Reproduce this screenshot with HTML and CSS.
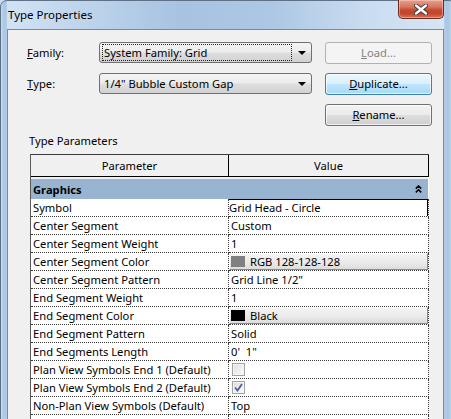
FILE: index.html
```html
<!DOCTYPE html>
<html>
<head>
<meta charset="utf-8">
<title>Type Properties</title>
<link rel="stylesheet" href="styles.css">
</head>
<body>
<div class="window">
  <div class="titlebar">
    <span class="title">Type Properties</span>
    <div class="close">
      <svg width="14" height="11" viewBox="0 0 14 11">
        <path d="M2 1.5 L12 9.5 M12 1.5 L2 9.5" stroke="#3a3a3a" stroke-width="4.2" stroke-linecap="round"/>
        <path d="M2 1.5 L12 9.5 M12 1.5 L2 9.5" stroke="#ffffff" stroke-width="2.4" stroke-linecap="round"/>
      </svg>
    </div>
  </div>
  <div class="client">
    <div class="topgrid">
      <span class="lbl"><u>F</u>amily:</span>
      <div class="combo"><span class="ctext focus">System Family: Grid</span><span class="arrow"></span></div>
      <div class="btn disabled"><u>L</u>oad...</div>

      <span class="lbl"><u>T</u>ype:</span>
      <div class="combo"><span class="ctext">1/4" Bubble Custom Gap</span><span class="arrow"></span></div>
      <div class="btn hot"><u>D</u>uplicate...</div>

      <span></span>
      <span></span>
      <div class="btn"><u>R</u>ename...</div>
    </div>

    <div class="section">Type Parameters</div>

    <div class="table">
      <div class="hcell">Parameter</div>
      <div class="hcell">Value</div>

      <div class="band">
        <span>Graphics</span>
        <svg width="7" height="8" viewBox="0 0 7 8"><path d="M0.8 3.6 L3.5 0.9 L6.2 3.6 M0.8 7.4 L3.5 4.7 L6.2 7.4" stroke="#000" stroke-width="1.5" fill="none"/></svg>
      </div>

      <div class="cell">Symbol</div>
      <div class="cell val"><div class="selbox">Grid Head - Circle</div></div>

      <div class="cell">Center Segment</div>
      <div class="cell val">Custom</div>

      <div class="cell">Center Segment Weight</div>
      <div class="cell val">1</div>

      <div class="cell">Center Segment Color</div>
      <div class="cell val"><div class="colorbtn"><span class="swatch gray"></span>RGB 128-128-128</div></div>

      <div class="cell">Center Segment Pattern</div>
      <div class="cell val">Grid Line 1/2"</div>

      <div class="cell">End Segment Weight</div>
      <div class="cell val">1</div>

      <div class="cell">End Segment Color</div>
      <div class="cell val"><div class="colorbtn"><span class="swatch black"></span>Black</div></div>

      <div class="cell">End Segment Pattern</div>
      <div class="cell val">Solid</div>

      <div class="cell">End Segments Length</div>
      <div class="cell val">0'&nbsp; 1"</div>

      <div class="cell">Plan View Symbols End 1 (Default)</div>
      <div class="cell val"><span class="check"></span></div>

      <div class="cell">Plan View Symbols End 2 (Default)</div>
      <div class="cell val"><span class="check">
        <svg width="11" height="11" viewBox="0 0 11 11"><path d="M2 5.5 L4.5 8.5 L9 2" stroke="#4b5f96" stroke-width="1.8" fill="none"/></svg>
      </span></div>

      <div class="cell">Non-Plan View Symbols (Default)</div>
      <div class="cell val">Top</div>

      <div class="cell"></div>
      <div class="cell val"></div>
    </div>
  </div>
</div>
</body>
</html>
```
FILE: styles.css
```css
* { box-sizing: border-box; margin: 0; padding: 0; }
html, body { width: 451px; height: 419px; overflow: hidden; background: #c9dcf0; }
body { font-family: "Noto Sans", "Liberation Sans", sans-serif; font-size: 11.2px; color: #000; }

.window {
  width: 456px;
  height: 440px;
  border: 1px solid #5f7186;
  border-radius: 7px 7px 0 0;
  background:
    linear-gradient(90deg, #c6daef 0px, #a9c6e4 3px, #b4cde8 6px, transparent 6px, transparent 443px, #b4cde8 443px, #a9c6e4 447px, #c6daef 452px),
    linear-gradient(90deg, #d3e3f4 0%, #bcd3eb 20%, #a7c3e1 40%, #adc8e4 60%, #c9dcf0 80%, #d8e6f4 100%);
  display: flex;
  flex-direction: column;
}

.titlebar {
  height: 28px;
  margin-left: 6px;
  width: 437px;
  display: flex;
  justify-content: space-between;
  align-items: flex-start;
}
.title {
  font-size: 11.5px;
  padding-left: 1px;
  margin-top: 6px;
  line-height: 16px;
  color: #000;
}
.close {
  width: 46px;
  height: 19px;
  margin-top: -1px;
  border: 1px solid #6b2a1e;
  border-top: none;
  border-radius: 0 0 5px 5px;
  background: linear-gradient(180deg, #e6a08f 0%, #d7735c 40%, #c44a2f 55%, #c3452a 75%, #d6735a 100%);
  box-shadow: inset 0 0 0 1px rgba(255, 220, 210, 0.45);
  display: flex;
  align-items: center;
  justify-content: center;
}

.client {
  margin-left: 6px;
  width: 437px;
  flex: 1;
  border: 1px solid #7a8a9c;
  background: #f0f0f0;
  padding: 12px 0 0 19px;
}

.topgrid {
  display: grid;
  grid-template-columns: 59px 213px 107px;
  grid-auto-rows: 22px;
  column-gap: 13px;
  row-gap: 9px;
}
.lbl { display: flex; align-items: center; line-height: 14px; padding-bottom: 1px; }
u { text-decoration: underline; text-underline-offset: 1px; }

.combo {
  height: 21px;
  border: 1px solid #707070;
  border-radius: 3px;
  background: linear-gradient(180deg, #f4f4f4 0%, #ececec 48%, #dedede 52%, #d2d2d2 100%);
  display: flex;
  align-items: center;
  padding: 0 4px 0 2px;
}
.ctext {
  flex: 1;
  line-height: 15px;
  padding-left: 1px;
  margin-right: 6px;
  border: 1px dotted transparent;
}
.ctext.focus { border-color: #222; }
.arrow {
  width: 0; height: 0;
  border-left: 4px solid transparent;
  border-right: 4px solid transparent;
  border-top: 4px solid #000;
  margin-right: 1px;
}

.btn {
  border: 1px solid #707070;
  border-radius: 3px;
  background: linear-gradient(180deg, #f3f3f3 0%, #ebebeb 48%, #dddddd 52%, #cfcfcf 100%);
  box-shadow: inset 0 0 0 1px rgba(255, 255, 255, 0.7);
  display: flex;
  align-items: center;
  justify-content: center;
  line-height: 14px;
}
.btn.disabled {
  border-color: #adb2b5;
  background: #f4f4f4;
  box-shadow: none;
  color: #838383;
}
.btn.hot {
  border-color: #3c7fb1;
  background: linear-gradient(180deg, #eaf6fd 0%, #d9f0fc 48%, #bee6fd 52%, #a7d9f5 100%);
}

.section {
  margin: 8px 0 6px 2px;
  line-height: 14px;
}

.table {
  margin-left: 3px;
  width: 399px;
  display: grid;
  grid-template-columns: 198px 200px;
  border-left: 1px solid #5a5a5a;
  border-top: 1px solid #3c3c3c;
  background: #ffffff;
}
.hcell {
  height: 22px;
  background: #f0f0f0;
  border-right: 1px solid #000;
  border-bottom: 1px solid #000;
  display: flex;
  align-items: center;
  justify-content: center;
  padding-bottom: 1px;
}
.band {
  grid-column: 1 / span 2;
  height: 22px;
  margin-right: 1px;
  border-top: 2px solid #f0f0f0;
  background: #99b4d1;
  display: flex;
  align-items: center;
  justify-content: space-between;
  padding: 0 6px 0 2px;
  font-weight: bold;
}
.cell {
  height: 18px;
  line-height: 17px;
  padding-left: 2px;
  border-right: 1px dotted #3a3a3a;
  border-bottom: 1px dotted #3a3a3a;
  white-space: nowrap;
  overflow: hidden;
}
.cell.val { padding-left: 2px; position: relative; }
.selbox {
  margin: 0 0 0 -2px;
  height: 18px;
  margin-top: 0;
  border: 1px solid #000;
  padding-left: 1px;
  line-height: 16px;
}
.cell.val:has(.selbox), .cell.val:has(.colorbtn) { padding-left: 0; }
.colorbtn {
  height: 17px;
  border-top: 1px solid #ffffff;
  border-left: 1px solid #ffffff;
  border-right: 1px solid #8a8a8a;
  border-bottom: 1px solid #8a8a8a;
  background: linear-gradient(180deg, #f4f4f4 0%, #e9e9e9 60%, #dcdcdc 100%);
  display: flex;
  align-items: center;
  padding-left: 1px;
  line-height: 15px;
}
.swatch {
  width: 14px;
  height: 11px;
  margin-right: 5px;
}
.swatch.gray { background: #808080; }
.swatch.black { background: #000; }
.check {
  display: inline-flex;
  align-items: center;
  justify-content: center;
  width: 13px;
  height: 13px;
  margin: 2px 0 0 1px;
  vertical-align: top;
  border: 1px solid #a3a3a3;
  background: linear-gradient(135deg, #dcdcdc 0%, #f0f0f0 60%, #fbfbfb 100%);
  box-shadow: inset 0 0 0 1px #f4f4f4;
}
```
